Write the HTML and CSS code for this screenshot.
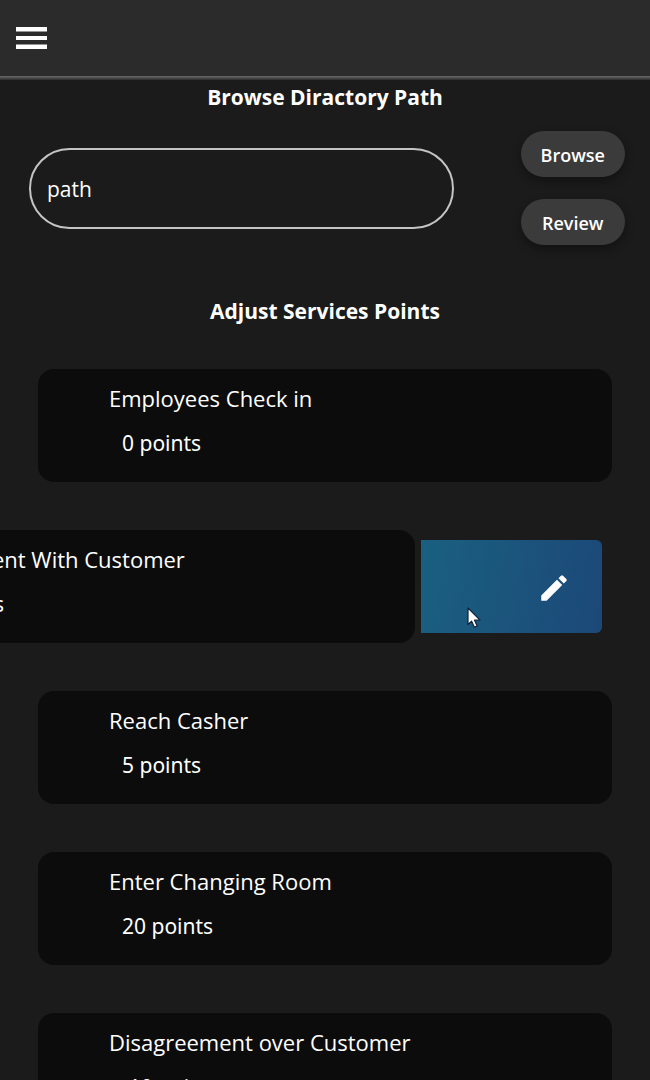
FILE: index.html
```html
<!DOCTYPE html>
<html lang="en">
<head>
<meta charset="utf-8">
<meta name="viewport" content="width=device-width, initial-scale=1">
<title>Services Points</title>
<link rel="stylesheet" href="styles.css">
</head>
<body>
<header class="topbar">
  <button class="menu" type="button" aria-label="Menu">
    <svg width="32" height="22" viewBox="0 0 32 22" aria-hidden="true"><path fill="#fff" d="M1 0h31v4.500H1zM1 9h31v4H1zM1 17.500h31V22H1z"/></svg>
  </button>
</header>
<main class="page">
  <h2 class="heading" id="path-heading">Browse Diractory Path</h2>
  <form class="picker">
    <input class="path" type="text" value="path" aria-labelledby="path-heading">
    <div class="actions">
      <button class="pill" type="button">Browse</button>
      <button class="pill" type="button">Review</button>
    </div>
  </form>
  <h2 class="heading">Adjust Services Points</h2>
  <ul class="services">
    <li class="row"><article class="card"><h3 class="name">Employees Check in</h3><p class="points">0 points</p></article></li>
    <li class="row">
      <article class="card card-open"><h3 class="name">Agreement With Customer</h3><p class="points">5 points</p></article>
      <button class="edit" type="button" aria-label="Edit">
        <svg width="34" height="34" viewBox="0 0 24 24" aria-hidden="true"><path fill="#fff" d="M3 17.25V21h3.75L17.81 9.94l-3.75-3.75L3 17.25zM20.71 7.04a1 1 0 0 0 0-1.41l-2.34-2.34a1 1 0 0 0-1.41 0l-1.83 1.83 3.75 3.75 1.83-1.83z"/></svg>
      </button>
    </li>
    <li class="row"><article class="card"><h3 class="name">Reach Casher</h3><p class="points">5 points</p></article></li>
    <li class="row"><article class="card"><h3 class="name">Enter Changing Room</h3><p class="points">20 points</p></article></li>
    <li class="row"><article class="card"><h3 class="name">Disagreement over Customer</h3><p class="points">-10 points</p></article></li>
  </ul>
</main>
<svg class="cursor" width="16" height="24" viewBox="0 0 16 24" aria-hidden="true"><path fill="#fff" stroke="#10233a" stroke-width="1.2" stroke-linejoin="round" d="M2 2v16.500l3.600-3.300 2.800 6 2.800-1.300-2.700-5.700H14z"/></svg>
</body>
</html>
```
FILE: styles.css
```css
* {
  box-sizing: border-box;
}

body {
  margin: 0;
  height: 100vh;
  overflow: hidden;
  background: #1b1b1b;
  color: #fff;
  font-family: "Segoe UI", "Open Sans", "Noto Sans", sans-serif;
}

button,
input {
  font: inherit;
  color: inherit;
}

.topbar {
  height: 80px;
  padding: 27px 15px 0;
  background: linear-gradient(#6a6a6a, #2b2b2b) bottom / 100% 4px no-repeat #2b2b2b;
}

.menu {
  display: block;
  padding: 0;
  border: 0;
  background: none;
}

.menu svg {
  display: block;
}

.heading {
  margin: 0;
  font-size: 21px;
  font-weight: 700;
  line-height: 34px;
  text-align: center;
}

.picker {
  display: flex;
  justify-content: space-between;
  align-items: center;
  padding: 17px 25px 49px 29px;
}

.path {
  flex: 0 1 425px;
  min-width: 0;
  height: 81px;
  padding: 2px 16px 0;
  border: 2px solid #c4c4c4;
  border-radius: 41px;
  background: transparent;
  font-size: 21px;
}

.actions {
  display: grid;
  gap: 22px;
}

.pill {
  height: 46px;
  padding: 2px 20px 0;
  border: 0;
  border-radius: 23px;
  background: #3b3b3b;
  box-shadow: 0 4px 10px rgba(0, 0, 0, 0.35);
  font-size: 18px;
  font-weight: 600;
}

.services {
  display: grid;
  gap: 48px;
  margin: 0;
  padding: 41px 0 0;
  list-style: none;
}

.row {
  display: flex;
  padding: 0 38px;
  overflow: hidden;
}

.card {
  flex: 0 0 100%;
  height: 113px;
  padding: 11px 71px;
  border-radius: 16px;
  background: #0c0c0c;
}

.card-open {
  margin-left: -197px;
}

.name,
.points {
  margin: 0;
  font-size: 22px;
  font-weight: 400;
  line-height: 36px;
}

.points {
  padding: 9px 13px 0;
  font-family: "Segoe UI", "Noto Sans", sans-serif;
  font-size: 21px;
}

.edit {
  flex: 0 0 181px;
  display: flex;
  justify-content: flex-end;
  align-items: center;
  margin: 10px 10px 10px 6px;
  padding: 2px 31px 0;
  border: 0;
  border-radius: 0 6px 6px 0;
  background: linear-gradient(100deg, #1a6080, #1c4878);
}

.cursor {
  position: absolute;
  left: 466px;
  top: 606px;
}
```
